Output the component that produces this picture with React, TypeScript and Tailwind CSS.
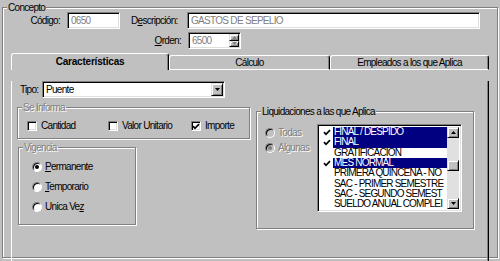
import React from 'react';

const sunken =
    'border border-t-[#808080] border-l-[#808080] border-b-white border-r-white shadow-[inset_1px_1px_0_#000,inset_-1px_-1px_0_#dfdfdf]';
const raised =
    'border border-t-[#dfdfdf] border-l-[#dfdfdf] border-b-black border-r-black shadow-[inset_1px_1px_0_#fff,inset_-1px_-1px_0_#808080]';
const etched = 'border border-[#808080] shadow-[inset_1px_1px_0_#fff,1px_1px_0_#fff]';
const greyText = 'text-[#808080] [text-shadow:1px_1px_0_#fff]';

type GroupProps = { title: string; disabled?: boolean; className?: string; children?: React.ReactNode };

const Group: React.FC<GroupProps> = ({ title, disabled, className = '', children }) => (
    <fieldset className={`min-w-0 ${etched} ${className}`}>
        <legend className={`ml-[4px] px-[1px] h-[11px] leading-[11px] bg-[#c0c0c0] ${disabled ? greyText : ''}`}>
            {title}
        </legend>
        {children}
    </fieldset>
);

const Tick: React.FC<{ color?: string }> = ({ color = '#000' }) => (
    <svg width="8" height="7" viewBox="0 0 8 7">
        <path d="M1 3.2 L3 5.3 L7 1.2" stroke={color} strokeWidth="1.7" fill="none" />
    </svg>
);

const Checkbox: React.FC<{ checked?: boolean; label: string; className?: string }> = ({ checked, label, className = '' }) => (
    <div className={`flex items-center ${className}`}>
        <span className={`w-[10px] h-[10px] bg-white ${sunken} flex items-center justify-center`}>
            {checked && <Tick />}
        </span>
        <span className="ml-[4px]">{label}</span>
    </div>
);

const Radio: React.FC<{ on?: boolean; disabled?: boolean; children: React.ReactNode; className?: string }> = ({
    on,
    disabled,
    children,
    className = '',
}) => (
    <div className={`flex items-center ${className}`}>
        <span
            className={`w-[10px] h-[10px] rounded-full border border-t-[#808080] border-l-[#808080] border-b-white border-r-white shadow-[inset_1px_1px_0_#000] flex items-center justify-center ${
                disabled ? 'bg-[#c0c0c0]' : 'bg-white'
            }`}
        >
            {on && <span className={`w-[4px] h-[4px] rounded-full ${disabled ? 'bg-[#808080]' : 'bg-black'}`} />}
        </span>
        <span className={`ml-[3px] ${disabled ? greyText : ''}`}>{children}</span>
    </div>
);

const Arrow: React.FC<{ dir: 'up' | 'down'; color?: string }> = ({ dir, color = '#000' }) => (
    <svg width="5" height="3" viewBox="0 0 5 3">
        <path d={dir === 'up' ? 'M2.5 0 L5 3 L0 3 Z' : 'M0 0 L5 0 L2.5 3 Z'} fill={color} />
    </svg>
);

const liquidaciones = [
    { name: 'FINAL / DESPIDO', on: true },
    { name: 'FINAL', on: true },
    { name: 'GRATIFICACION', on: false },
    { name: 'MES NORMAL', on: true },
    { name: 'PRIMERA QUINCENA - NO', on: false },
    { name: 'SAC - PRIMER SEMESTRE', on: false },
    { name: 'SAC - SEGUNDO SEMEST', on: false },
    { name: 'SUELDO ANUAL COMPLEI', on: false },
];

const App: React.FC = () => {
    return (
        <div className="w-[500px] h-[261px] overflow-hidden bg-[#c0c0c0] text-black text-[10px] tracking-[-0.7px] leading-none font-['Liberation_Sans',Arial,sans-serif]">
            <Group title="Concepto" className="mx-[2px] mt-[2px] h-[256px]">
                {/* cabecera */}
                <div className="flex items-center h-[17px] -mt-px">
                    <span className="w-[57px] text-right">Código:</span>
                    <div className={`ml-[7px] w-[53px] h-[17px] bg-white ${sunken} flex items-center pl-[3px] text-[#808080]`}>
                        0650
                    </div>
                    <span className="ml-[11px] w-[56px]">
                        D<span className="underline">e</span>scripción:
                    </span>
                    <div className={`w-[293px] h-[17px] bg-white ${sunken} flex items-center pl-[3px] text-[#808080]`}>
                        GASTOS DE SEPELIO
                    </div>
                </div>
                <div className="flex items-center h-[17px] mt-[3px]">
                    <span className="w-[178px] text-right">
                        <span className="underline">O</span>rden:
                    </span>
                    <div className={`ml-[7px] w-[53px] h-[17px] bg-white ${sunken} flex items-center pl-[3px] text-[#808080]`}>
                        <span className="flex-1">6500</span>
                        <div className="w-[10px] h-[13px] mr-px flex flex-col">
                            <div className={`flex-1 bg-[#c0c0c0] ${raised} flex items-center justify-center`}>
                                <Arrow dir="up" color="#808080" />
                            </div>
                            <div className={`flex-1 bg-[#c0c0c0] ${raised} flex items-center justify-center`}>
                                <Arrow dir="down" color="#808080" />
                            </div>
                        </div>
                    </div>
                </div>

                {/* pestañas */}
                <div className="ml-[8px] mt-[4px] h-[17px] flex items-end">
                    <div className="w-[158px] h-[17px] border-l border-t border-r border-l-white border-t-white border-r-black rounded-t-[3px] shadow-[inset_-1px_0_0_#808080] font-bold tracking-[-0.2px] flex items-center justify-center">
                        Características
                    </div>
                    <div className="w-[161px] h-[15px] border border-l-white border-t-white border-r-black border-b-white rounded-t-[3px] shadow-[inset_-1px_0_0_#808080] flex items-center justify-center">
                        Cálculo
                    </div>
                    <div className="w-[159px] h-[15px] border border-l-white border-t-white border-r-black border-b-white rounded-t-[3px] shadow-[inset_-1px_0_0_#808080] flex items-center justify-center">
                        Empleados a los que Aplica
                    </div>
                </div>

                <div className="ml-[8px] w-[478px] h-[184px] border-l border-r border-b border-l-white border-r-black border-b-black shadow-[inset_-1px_-1px_0_#808080]">
                    <div className="mt-[11px] pl-[8px] flex items-center">
                        <span className="w-[22px]">Tipo:</span>
                        <div className={`w-[183px] h-[17px] bg-white ${sunken} flex items-center pl-[3px]`}>
                            <span className="flex-1">Puente</span>
                            <div className={`w-[12px] h-[13px] mr-px bg-[#c0c0c0] ${raised} flex items-center justify-center`}>
                                <Arrow dir="down" />
                            </div>
                        </div>
                    </div>

                    <div className="flex mt-[4px]">
                        <div className="ml-[5px] w-[233px]">
                            <Group title="Se Informa" disabled className="h-[37px]">
                                <div className="mt-[8px] pl-[9px] h-[10px] flex items-center">
                                    <Checkbox label="Cantidad" className="w-[81px]" />
                                    <Checkbox label="Valor Unitario" className="w-[83px]" />
                                    <Checkbox label="Importe" checked />
                                </div>
                            </Group>
                            <Group title="Vigencia" disabled className="mt-[3px] ml-[1px] w-[118px] h-[83px]">
                                <div className="mt-[4px] pl-[13px]">
                                    <Radio on className="h-[20px]">
                                        <span className="underline">P</span>ermanente
                                    </Radio>
                                    <Radio className="h-[20px]">
                                        <span className="underline">T</span>emporario
                                    </Radio>
                                    <Radio className="h-[20px]">
                                        Unica Ve<span className="underline">z</span>
                                    </Radio>
                                </div>
                            </Group>
                        </div>

                        <Group title="Liquidaciones a las que Aplica" className="ml-[6px] mt-[4px] w-[218px] h-[123px]">
                            <div className="flex">
                                <div className="w-[60px] pl-[8px] mt-[8px]">
                                    <Radio disabled className="h-[15px]">
                                        Todas
                                    </Radio>
                                    <Radio disabled on className="h-[15px]">
                                        Algunas
                                    </Radio>
                                </div>
                                <div className={`mt-[7px] w-[145px] h-[88px] bg-white ${sunken} flex p-[2px] overflow-hidden`}>
                                    <div className="flex-1 overflow-hidden tracking-[-0.8px]">
                                        {liquidaciones.map((l) => (
                                            <div key={l.name} className="h-[10.33px] flex items-center">
                                                <span className="w-[13px] flex justify-center">{l.on && <Tick />}</span>
                                                <span
                                                    className={`flex-1 h-full flex items-center pl-px whitespace-nowrap overflow-hidden ${
                                                        l.on ? 'bg-[#000080] text-white' : ''
                                                    }`}
                                                >
                                                    {l.name}
                                                </span>
                                            </div>
                                        ))}
                                    </div>
                                    <div className="w-[12px] flex flex-col bg-[#e0e0e0]">
                                        <div className={`h-[11px] bg-[#c0c0c0] ${raised} flex items-center justify-center`}>
                                            <Arrow dir="up" />
                                        </div>
                                        <div className="flex-1">
                                            <div className={`mt-[22px] h-[11px] bg-[#c0c0c0] ${raised}`} />
                                        </div>
                                        <div className={`h-[11px] bg-[#c0c0c0] ${raised} flex items-center justify-center`}>
                                            <Arrow dir="down" />
                                        </div>
                                    </div>
                                </div>
                            </div>
                        </Group>
                    </div>
                </div>
            </Group>
        </div>
    );
};

export default App;
